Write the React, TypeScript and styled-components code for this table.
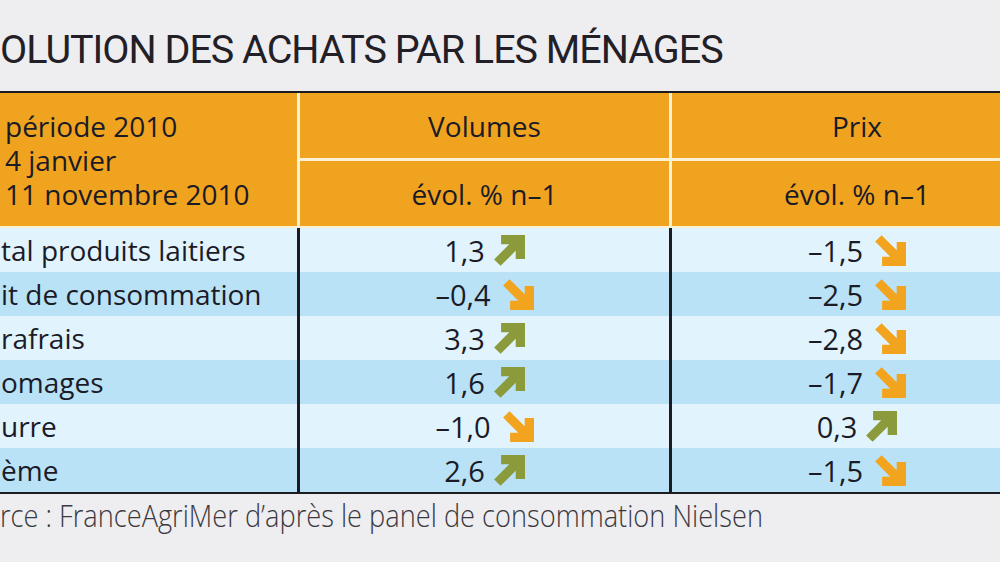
import React from 'react';
import styled, { createGlobalStyle } from 'styled-components';

const Global = createGlobalStyle`
  *, *::before, *::after { box-sizing: border-box; }
  html, body { margin: 0; padding: 0; background: #eeedf0; }
  body {
    width: 1000px;
    height: 562px;
    overflow: hidden;
    font-family: "Open Sans", "Liberation Sans", sans-serif;
    color: #1b1b28;
  }
`;

const CREAM = '#fdf1d4';
const DARK = '#1d1b22';

const Page = styled.div`
  width: 1000px;
  height: 562px;
  overflow: hidden;
  background: #eeedf0;
`;

const Title = styled.h1`
  margin: 0;
  padding-top: 30px;
  height: 69px;
  line-height: 39px;
  font-family: Roboto, "Open Sans", sans-serif;
  font-weight: 400;
  font-size: 39.5px;
  letter-spacing: -1px;
  color: #222026;
  white-space: nowrap;
`;

const Table = styled.div`
  margin-top: 22px;
  width: 1042px;
  border-top: 2px solid ${DARK};
  border-bottom: 2px solid ${DARK};
`;

const Header = styled.div`
  display: grid;
  grid-template-columns: 300px 372px 370px;
  grid-template-rows: 68px 65px;
  background: #f0a31f;
  border-bottom: 2px solid ${CREAM};
  font-size: 28px;
  font-weight: 500;
`;

const PeriodCell = styled.div`
  grid-row: 1 / span 2;
  grid-column: 1;
  display: flex;
  flex-direction: column;
  justify-content: center;
  padding-left: 5px;
  line-height: 34px;
  border-right: 3px solid ${CREAM};
  white-space: nowrap;
`;

const PeriodLine = styled.div`
  height: 34px;
`;

const HeadCell = styled.div<{ $top?: boolean; $last?: boolean }>`
  display: flex;
  align-items: center;
  justify-content: center;
  white-space: nowrap;
  border-right: ${(p) => (p.$last ? 'none' : `3px solid ${CREAM}`)};
  border-bottom: ${(p) => (p.$top ? `3px solid ${CREAM}` : 'none')};
`;

const Row = styled.div<{ $alt: boolean }>`
  display: grid;
  grid-template-columns: 300px 372px 370px;
  height: 44px;
  background: ${(p) => (p.$alt ? '#b9e2f6' : '#e1f3fc')};
  font-size: 28px;
  font-weight: 500;
`;

const Label = styled.div`
  display: flex;
  align-items: center;
  padding-left: 1px;
  border-right: 3px solid ${DARK};
  white-space: nowrap;
  overflow: hidden;
`;

const ValueCell = styled.div<{ $last?: boolean }>`
  display: flex;
  align-items: center;
  justify-content: center;
  gap: 9px;
  font-size: 29px;
  border-right: ${(p) => (p.$last ? 'none' : `3px solid ${DARK}`)};
  white-space: nowrap;
`;

const ArrowSvg = styled.svg<{ $down: boolean }>`
  width: 31px;
  height: 31px;
  flex: none;
  margin-left: ${(p) => (p.$down ? '3px' : '0')};
  fill: ${(p) => (p.$down ? '#f2a41f' : '#8b9a3b')};
`;

const Source = styled.div`
  margin-top: 3px;
  font-family: "Open Sans", "Liberation Sans", sans-serif;
  font-weight: 300;
  font-size: 32px;
  line-height: 36px;
  color: #3a3940;
  white-space: nowrap;
  transform: scaleX(0.85);
  transform-origin: left center;
`;

type Dir = 'up' | 'down';

const Arrow = ({ dir }: { dir: Dir }) => (
  <ArrowSvg $down={dir === 'down'} viewBox="0 0 24 24" aria-hidden="true">
    {dir === 'up' ? (
      <polygon points="5.5,0 24,0 24,18.5 16.8,18.5 16.8,12.2 5.1,23.9 0.1,18.9 11.8,7.2 5.5,7.2" />
    ) : (
      <polygon points="5.5,24 24,24 24,5.5 16.8,5.5 16.8,11.8 5.1,0.1 0.1,5.1 11.8,16.8 5.5,16.8" />
    )}
  </ArrowSvg>
);

type RowData = [string, string, Dir, string, Dir];

const rows: RowData[] = [
  ['tal produits laitiers', '1,3', 'up', '–1,5', 'down'],
  ['it de consommation', '–0,4', 'down', '–2,5', 'down'],
  ['rafrais', '3,3', 'up', '–2,8', 'down'],
  ['omages', '1,6', 'up', '–1,7', 'down'],
  ['urre', '–1,0', 'down', '0,3', 'up'],
  ['ème', '2,6', 'up', '–1,5', 'down'],
];

export default function App() {
  return (
    <Page>
      <Global />
      <Title>OLUTION DES ACHATS PAR LES MÉNAGES</Title>
      <Table>
        <Header>
          <PeriodCell>
            <PeriodLine>période 2010</PeriodLine>
            <PeriodLine>4 janvier</PeriodLine>
            <PeriodLine>11 novembre 2010</PeriodLine>
          </PeriodCell>
          <HeadCell $top>Volumes</HeadCell>
          <HeadCell $top $last>Prix</HeadCell>
          <HeadCell>évol. % n–1</HeadCell>
          <HeadCell $last>évol. % n–1</HeadCell>
        </Header>
        {rows.map(([label, vol, volDir, price, priceDir], i) => (
          <Row key={label} $alt={i % 2 === 1}>
            <Label>{label}</Label>
            <ValueCell>
              <span>{vol}</span>
              <Arrow dir={volDir} />
            </ValueCell>
            <ValueCell $last>
              <span>{price}</span>
              <Arrow dir={priceDir} />
            </ValueCell>
          </Row>
        ))}
      </Table>
      <Source>rce : FranceAgriMer d’après le panel de consommation Nielsen</Source>
    </Page>
  );
}
